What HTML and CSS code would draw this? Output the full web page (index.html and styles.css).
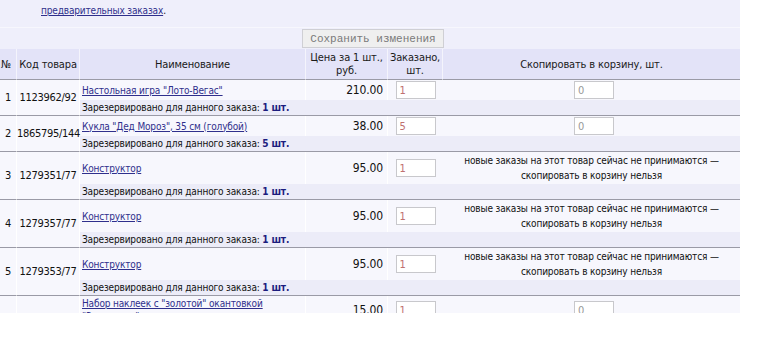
FILE: index.html
```html
<!DOCTYPE html>
<html lang="ru">
<head>
  <meta charset="UTF-8">
  <title>Предварительные заказы</title>
  <link rel="stylesheet" href="styles.css">
</head>
<body>
  <div class="page">
    <div class="note"><a href="#">предварительных заказах</a>.</div>
    <table class="orders">
      <colgroup>
        <col class="c-num">
        <col class="c-code">
        <col class="c-name">
        <col class="c-price">
        <col class="c-qty">
        <col class="c-copy">
      </colgroup>
      <tr class="actions">
        <td colspan="6"><button type="button">Сохранить изменения</button></td>
      </tr>
      <tr class="head">
        <th class="num">№</th>
        <th class="code">Код товара</th>
        <th class="name">Наименование</th>
        <th class="price">Цена за 1 шт.,<br>руб.</th>
        <th class="qty">Заказано,<br>шт.</th>
        <th class="copy">Скопировать в корзину, шт.</th>
      </tr>

      <tr class="item">
        <td class="num" rowspan="2">1</td>
        <td class="code" rowspan="2">1123962/92</td>
        <td class="name"><a href="#">Настольная игра "Лото-Вегас"</a></td>
        <td class="price">210.00</td>
        <td class="qty"><input type="text" value="1"></td>
        <td class="copy"><input type="text" value="0"></td>
      </tr>
      <tr class="reserve">
        <td colspan="4">Зарезервировано для данного заказа: <b>1 шт.</b></td>
      </tr>

      <tr class="item">
        <td class="num" rowspan="2">2</td>
        <td class="code" rowspan="2">1865795/144</td>
        <td class="name"><a href="#">Кукла "Дед Мороз", 35 см (голубой)</a></td>
        <td class="price">38.00</td>
        <td class="qty"><input type="text" value="5"></td>
        <td class="copy"><input type="text" value="0"></td>
      </tr>
      <tr class="reserve">
        <td colspan="4">Зарезервировано для данного заказа: <b>5 шт.</b></td>
      </tr>

      <tr class="item">
        <td class="num" rowspan="2">3</td>
        <td class="code" rowspan="2">1279351/77</td>
        <td class="name"><a href="#">Конструктор</a></td>
        <td class="price">95.00</td>
        <td class="qty"><input type="text" value="1"></td>
        <td class="copy">новые заказы на этот товар сейчас не принимаются —<br>скопировать в корзину нельзя</td>
      </tr>
      <tr class="reserve">
        <td colspan="4">Зарезервировано для данного заказа: <b>1 шт.</b></td>
      </tr>

      <tr class="item">
        <td class="num" rowspan="2">4</td>
        <td class="code" rowspan="2">1279357/77</td>
        <td class="name"><a href="#">Конструктор</a></td>
        <td class="price">95.00</td>
        <td class="qty"><input type="text" value="1"></td>
        <td class="copy">новые заказы на этот товар сейчас не принимаются —<br>скопировать в корзину нельзя</td>
      </tr>
      <tr class="reserve">
        <td colspan="4">Зарезервировано для данного заказа: <b>1 шт.</b></td>
      </tr>

      <tr class="item">
        <td class="num" rowspan="2">5</td>
        <td class="code" rowspan="2">1279353/77</td>
        <td class="name"><a href="#">Конструктор</a></td>
        <td class="price">95.00</td>
        <td class="qty"><input type="text" value="1"></td>
        <td class="copy">новые заказы на этот товар сейчас не принимаются —<br>скопировать в корзину нельзя</td>
      </tr>
      <tr class="reserve">
        <td colspan="4">Зарезервировано для данного заказа: <b>1 шт.</b></td>
      </tr>

      <tr class="item">
        <td class="num" rowspan="2">6</td>
        <td class="code" rowspan="2">1694699/160</td>
        <td class="name"><a href="#">Набор наклеек с "золотой" окантовкой "Звездопад"</a></td>
        <td class="price">15.00</td>
        <td class="qty"><input type="text" value="1"></td>
        <td class="copy"><input type="text" value="0"></td>
      </tr>
      <tr class="reserve">
        <td colspan="4">Зарезервировано для данного заказа: <b>1 шт.</b></td>
      </tr>
    </table>
  </div>
</body>
</html>
```

FILE: styles.css
```css
body {
  margin: 0;
  background: #fff;
  font-family: "DejaVu Sans Condensed", "DejaVu Sans", sans-serif;
  font-size: 10px;
  letter-spacing: -0.15px;
  color: #111;
}

.page {
  width: 740px;
  height: 313px;
  overflow: hidden;
  background: #efeffb;
}

a {
  color: #2f2f8c;
}

.note {
  height: 28px;
  padding: 4px 0 0 41px;
  box-sizing: border-box;
  line-height: 14px;
  border-bottom: 1px solid #f7f7fd;
}

.orders {
  width: 740px;
  border-collapse: separate;
  border-spacing: 0;
  table-layout: fixed;
}

.c-num { width: 17px; }
.c-code { width: 63px; }
.c-name { width: 226px; }
.c-price { width: 82px; }
.c-qty { width: 55px; }

.actions td {
  height: 21px;
  padding: 0;
  text-align: center;
  vertical-align: middle;
}

.actions button {
  height: 19px;
  padding: 0 7px;
  margin-left: 6px;
  font-family: "Liberation Mono", monospace;
  font-size: 11px;
  letter-spacing: 0;
  color: #7a7a7a;
  background: #efefef;
  border: 1px solid #cfcfd4;
}

.head th {
  height: 30px;
  padding: 0 2px;
  font-weight: normal;
  font-size: 11px;
  line-height: 13px;
  color: #1a1a1a;
  background: #e3e3f8;
  border-right: 1px solid #f4f4fc;
  border-bottom: 1px solid #9a9aa6;
  white-space: nowrap;
}

.head .num { padding: 0 1px; text-align: left; }
.head .copy { border-right: none; }

.item td {
  height: 18px;
  padding: 1px 2px;
  line-height: 15px;
  background: #f7f7fd;
  border-right: 1px solid #fff;
  vertical-align: middle;
}

.item .num,
.item .code {
  font-size: 11px;
  text-align: center;
  border-bottom: 1px solid #9a9aa6;
  white-space: nowrap;
  padding: 0;
}

.item .code {
  letter-spacing: -0.3px;
}

.item .name {
  line-height: 13px;
}

.item .price {
  text-align: right;
  padding-right: 4px;
  font-size: 12px;
}

.item .qty,
.item .copy {
  text-align: center;
  border-right: none;
}

.item input {
  width: 40px;
  height: 18px;
  box-sizing: border-box;
  margin: 0;
  padding: 0 3px;
  font-family: "DejaVu Sans Condensed", "DejaVu Sans", sans-serif;
  font-size: 11px;
  color: #c07070;
  background: #fff;
  border: 1px solid #c8c8cc;
}

.item .copy input {
  color: #999;
  margin-left: 5px;
}

.reserve td {
  height: 15px;
  padding: 0 2px;
  line-height: 15px;
  background: #ececf8;
  border-bottom: 1px solid #9a9aa6;
}

.reserve b {
  color: #1c1c7e;
}
```
